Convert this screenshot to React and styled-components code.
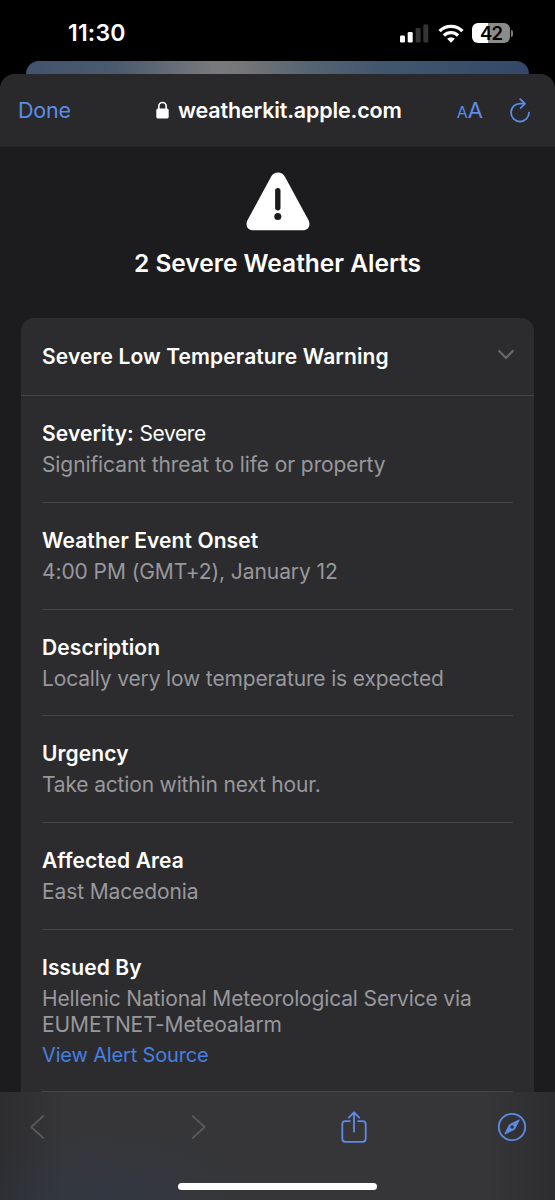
import React from 'react'
import styled, { createGlobalStyle } from 'styled-components'

const alertDetails = [
  { title: 'Severity:', value: 'Severe', lines: [{ text: 'Significant threat to life or property', spacing: -0.1 }] },
  { title: 'Weather Event Onset', lines: [{ text: '4:00 PM (GMT+2), January 12', spacing: -0.08 }] },
  { title: 'Description', lines: [{ text: 'Locally very low temperature is expected', spacing: -0.15 }] },
  { title: 'Urgency', lines: [{ text: 'Take action within next hour.', spacing: -0.17 }] },
  { title: 'Affected Area', lines: [{ text: 'East Macedonia', spacing: -0.12 }] },
  {
    title: 'Issued By',
    lines: [
      { text: 'Hellenic National Meteorological Service via', spacing: -0.15 },
      { text: 'EUMETNET-Meteoalarm', spacing: -0.1 }
    ],
    link: 'View Alert Source'
  }
]

const SignalIcon = () => (
  <svg width="29" height="19" viewBox="0 0 29 19">
    <rect x="0" y="11.5" width="5" height="7" rx="1.3" fill="#fff" />
    <rect x="7.7" y="8" width="5" height="10.5" rx="1.3" fill="#fff" />
    <rect x="15.6" y="4" width="5" height="14.5" rx="1.3" fill="#343434" />
    <rect x="23.3" y="0.5" width="5" height="18" rx="1.3" fill="#343434" />
  </svg>
)

const WifiIcon = () => (
  <svg width="26" height="19" viewBox="0 0 26 19" fill="none" stroke="#fff" strokeWidth="3.3">
    <path d="M1.6 7.1a16.2 16.2 0 0 1 22.8 0" />
    <path d="M5.9 11.5a10.1 10.1 0 0 1 14.2 0" />
    <path d="M13 18.8l-3.9-4a5.5 5.5 0 0 1 7.8 0z" fill="#fff" stroke="none" />
  </svg>
)

const LockIcon = () => (
  <svg width="13" height="18" viewBox="0 0 13 18">
    <path d="M2.8 9V5.2a3.7 3.7 0 0 1 7.4 0V9" fill="none" stroke="#fff" strokeWidth="1.7" />
    <rect x="0.3" y="7.6" width="12.4" height="10" rx="1.9" fill="#fff" />
  </svg>
)

const ReloadIcon = () => (
  <svg width="20" height="25" viewBox="0 0 20 25" fill="none" stroke="#5c8ce8" strokeWidth="1.8" strokeLinecap="round" strokeLinejoin="round">
    <path d="M19 14.6A9 9 0 1 1 10 5.6h4.6" />
    <path d="M10.2 1.2l4.7 4.4-4.2 4.4" />
  </svg>
)

const WarningIcon = () => (
  <svg width="64" height="60" viewBox="0 0 64 60">
    <path
      d="M32 0.5c3 0 5.2 1.4 6.8 4.1l23.2 42.7c3.4 6 .5 11-5.5 11H7.5c-6 0-8.9-5-5.5-11L25.2 4.6C26.8 1.9 29 .5 32 .5z"
      fill="#fff"
    />
    <path d="M31.8 18.7v17" stroke="#1c1c1e" strokeWidth="5.4" strokeLinecap="round" />
    <circle cx="31.8" cy="44.6" r="3.5" fill="#1c1c1e" />
  </svg>
)

const ChevronDown = () => (
  <svg width="18" height="12" viewBox="0 0 18 12" fill="none" stroke="#69696d" strokeWidth="2.2" strokeLinecap="round" strokeLinejoin="round">
    <path d="M3.2 2L10 9l6.8-7" />
  </svg>
)

const BackIcon = () => (
  <svg width="16" height="26" viewBox="0 0 16 26" fill="none" stroke="#58585a" strokeWidth="1.8" strokeLinecap="round" strokeLinejoin="round">
    <path d="M14.4 2L2.2 13l12.2 11" />
  </svg>
)

const ForwardIcon = () => (
  <svg width="16" height="26" viewBox="0 0 16 26" fill="none" stroke="#58585a" strokeWidth="1.8" strokeLinecap="round" strokeLinejoin="round">
    <path d="M1.6 2l12 11-12 11" />
  </svg>
)

const ShareIcon = () => (
  <svg width="26" height="32" viewBox="0 0 26 32" fill="none" stroke="#5c8ce8" strokeWidth="1.8" strokeLinecap="round" strokeLinejoin="round">
    <path d="M8.8 10.2H4.3a3 3 0 0 0-3 3v14.6a3 3 0 0 0 3 3h17.4a3 3 0 0 0 3-3V13.2a3 3 0 0 0-3-3h-4.5" />
    <path d="M13 20.6V1.6M7.8 6.6L13 1.3l5.2 5.3" />
  </svg>
)

const CompassIcon = () => (
  <svg width="30" height="30" viewBox="0 0 30 30">
    <circle cx="15" cy="15" r="13.2" fill="none" stroke="#5c8ce8" strokeWidth="1.8" />
    <path d="M22.3 7.8l-4.7 9.4L7.8 22.1l4.7-9.4z" fill="#5c8ce8" stroke="#5c8ce8" strokeLinejoin="round" />
    <circle cx="15.1" cy="15" r="1.8" fill="#343436" />
  </svg>
)

const App = () => (
  <Screen>
    <GlobalStyle />
    <StatusBar>
      <Clock>11:30</Clock>
      <StatusIcons>
        <SignalIcon />
        <WifiIcon />
        <Battery>
          <BatteryBody>42</BatteryBody>
          <BatteryTip />
        </Battery>
      </StatusIcons>
    </StatusBar>
    <BackSheet />
    <Sheet>
      <AddressBar>
        <DoneButton>Done</DoneButton>
        <Address>
          <LockIcon />
          <Host>weatherkit.apple.com</Host>
        </Address>
        <AddressActions>
          <TextSize><small>A</small>A</TextSize>
          <ReloadIcon />
        </AddressActions>
      </AddressBar>
      <Page>
        <WarningIcon />
        <Heading>2 Severe Weather Alerts</Heading>
        <Card>
          <CardHeader>
            <CardTitle>Severe Low Temperature Warning</CardTitle>
            <ChevronDown />
          </CardHeader>
          {
            alertDetails.map(item => (
              <Detail key={item.title} $tall={!!item.link}>
                <DetailTitle>{item.title}{item.value && <span> {item.value}</span>}</DetailTitle>
                <DetailText>
                  {item.lines.map(line => <Line key={line.text} $spacing={line.spacing}>{line.text}</Line>)}
                </DetailText>
                {item.link && <SourceLink>{item.link}</SourceLink>}
              </Detail>
            ))
          }
        </Card>
      </Page>
    </Sheet>
    <BottomBar>
      <Tools>
        <BackIcon />
        <ForwardIcon />
        <ShareIcon />
        <CompassIcon />
      </Tools>
      <HomeIndicator />
    </BottomBar>
  </Screen>
)

const GlobalStyle = createGlobalStyle`
  * {
    box-sizing: border-box;
  }
  body {
    margin: 0;
    background: #000;
  }
  svg {
    display: block;
    flex-shrink: 0;
  }
`
const Screen = styled.div`
  display: flex;
  flex-direction: column;
  width: 555px;
  height: 1200px;
  overflow: hidden;
  background: #000;
  color: #fff;
  font-family: Inter, 'Liberation Sans', sans-serif;
  font-size: 21px;
  white-space: nowrap;
`
const StatusBar = styled.div`
  display: flex;
  justify-content: space-between;
  align-items: center;
  flex: none;
  height: 61px;
  padding: 5px 42px 0 68px;
`
const Clock = styled.div`
  font-size: 23px;
  font-weight: 600;
  letter-spacing: 0.2px;
`
const StatusIcons = styled.div`
  display: flex;
  align-items: center;
  gap: 8.5px;
`
const Battery = styled.div`
  display: flex;
  align-items: center;
  gap: 1px;
`
const BatteryBody = styled.div`
  width: 38px;
  height: 20px;
  border-radius: 6px;
  background: linear-gradient(to right, #fff 43%, #8b8b8b 43%);
  color: #000;
  font-size: 18.5px;
  font-weight: 600;
  line-height: 20px;
  letter-spacing: -0.8px;
  text-align: center;
`
const BatteryTip = styled.div`
  width: 2px;
  height: 7px;
  border-radius: 0 2px 2px 0;
  background: #7b7b7b;
`
const BackSheet = styled.div`
  flex: none;
  height: 13px;
  margin: 0 26px;
  border-radius: 13px 13px 0 0;
  background: linear-gradient(to right, #41536d 0%, #4b5a6e 18%, #777a7c 37%, #777878 42%, #566472 56%, #42576f 70%, #334868 100%);
`
const Sheet = styled.div`
  flex: 1;
  min-height: 0;
  overflow: hidden;
  border-radius: 15px 15px 0 0;
  background: #1c1c1e;
`
const AddressBar = styled.div`
  display: grid;
  grid-template-columns: 138px 1fr auto;
  align-items: center;
  height: 73px;
  padding: 0 25px 0 18px;
  background: #29292b;
  border-bottom: 1px solid #232325;
`
const DoneButton = styled.div`
  color: #5c8ce8;
  font-size: 21.5px;
  letter-spacing: -0.2px;
`
const Address = styled.div`
  display: flex;
  align-items: center;
  gap: 9px;
`
const Host = styled.div`
  font-size: 21.5px;
  font-weight: 600;
  letter-spacing: -0.17px;
`
const AddressActions = styled.div`
  display: flex;
  justify-content: flex-end;
  align-items: center;
  gap: 27px;
`
const TextSize = styled.div`
  color: #5c8ce8;
  font-size: 22px;
  small {
    font-size: 16px;
  }
`
const Page = styled.div`
  display: flex;
  flex-direction: column;
  align-items: center;
  padding: 25px 21px 0;
`
const Heading = styled.div`
  margin-top: 15px;
  font-size: 24.5px;
  font-weight: 600;
  line-height: 32px;
`
const Card = styled.div`
  width: 513px;
  margin-top: 39px;
  border-radius: 13px 13px 0 0;
  background: #2c2c2e;
`
const CardHeader = styled.div`
  display: flex;
  justify-content: space-between;
  align-items: center;
  height: 78px;
  padding: 0 20px 0 21px;
  border-bottom: 1px solid #454547;
  svg {
    margin-bottom: 4px;
  }
`
const CardTitle = styled.div`
  font-weight: 600;
  letter-spacing: 0.12px;
`
const Detail = styled.div`
  height: ${props => props.$tall ? '162px' : '106.75px'};
  margin: 0 21px;
  padding-top: 25px;
  border-bottom: 1px solid #454547;
`
const DetailTitle = styled.div`
  line-height: 26px;
  font-weight: 600;
  letter-spacing: 0.1px;
  span {
    font-weight: 400;
    letter-spacing: -0.4px;
  }
`
const DetailText = styled.div`
  margin-top: 5px;
  color: #98989d;
`
const Line = styled.div`
  line-height: 26px;
  letter-spacing: ${props => props.$spacing}px;
`
const SourceLink = styled.div`
  margin-top: 4px;
  color: #4580e0;
  font-size: 20px;
  letter-spacing: -0.16px;
  line-height: 26px;
`
const BottomBar = styled.div`
  display: flex;
  flex-direction: column;
  align-items: center;
  flex: none;
  height: 108px;
  background:
    radial-gradient(ellipse 150px 75px at 100px 112px, rgba(45, 56, 75, 0.55), transparent),
    linear-gradient(to right, #2d2d2f 0, #363638 65px, #363638 485px, #2d2d2f 555px);
`
const Tools = styled.div`
  display: grid;
  grid-template-columns: 162px 150px 1fr auto;
  align-items: center;
  width: 100%;
  height: 70px;
  padding: 0 28px 0 29px;
`
const HomeIndicator = styled.div`
  width: 199px;
  height: 7px;
  margin-top: 21px;
  border-radius: 4px;
  background: #fff;
`

export default App
